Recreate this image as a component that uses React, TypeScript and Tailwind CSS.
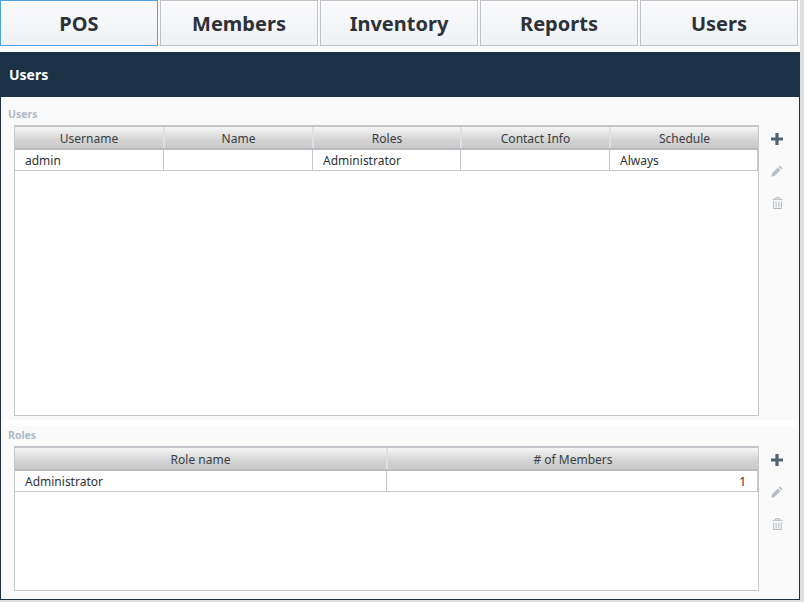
import React from 'react';

const tabs = ['POS', 'Members', 'Inventory', 'Reports', 'Users'];

const headCell = 'flex items-center justify-center pt-[2px] border-l-2 first:border-l-0 border-[#e0e0e0] text-[12px] text-[#3a3f45] bg-gradient-to-b from-[#f6f6f6] via-[#d4d4d4] via-60% to-[#c9c9c9]';
const bodyCell = 'flex items-center pt-[1px] border-r border-[#c4c8cc] px-[10px] text-[12px] text-[#2f3338]';

const ActionRail: React.FC = () => (
    <div className="w-[40px] flex flex-col items-center pt-[8px] pr-[4px] gap-[20px] shrink-0">
        <svg width="12" height="12" viewBox="0 0 12 12" className="text-[#4f6478]">
            <path d="M4.4 0h3.2v4.4H12v3.2H7.6V12H4.4V7.6H0V4.4h4.4z" fill="currentColor" />
        </svg>
        <svg width="12" height="12" viewBox="0 0 13 13" className="text-[#b5bec7]">
            <path d="M9.6 0.6l2.8 2.8-1.4 1.4-2.8-2.8zM7.4 2.8l2.8 2.8-6.4 6.4L0.4 12.6l0.6-3.4z" fill="currentColor" />
        </svg>
        <svg width="11" height="12" viewBox="0 0 12 13" fill="none" className="text-[#a9b4bd]" stroke="currentColor">
            <path d="M0.5 2.5h11M4 2.5V0.7h4v1.8M1.8 4.5v8h8.4v-8M4.5 5v6.5M7.5 5v6.5" />
        </svg>
    </div>
);

const App: React.FC = () => {
    return (
        <div className="w-[804px] h-[602px] bg-[#dedede] overflow-hidden" style={{ fontFamily: '"Noto Sans", sans-serif' }}>
            {/* Top nav */}
            <div className="h-[52px] w-[800px] bg-[#fafafa] flex gap-[2px]">
                {tabs.map((tab, i) => (
                    <div
                        key={tab}
                        className={`w-[158px] h-[46px] flex items-center justify-center pt-[2px] border text-[20px] font-bold text-[#2d3239] bg-gradient-to-b from-[#fbfbfc] to-[#eef1f5] ${i === 0 ? 'border-[#4da3e0]' : 'border-[#c0c3c6]'}`}
                    >
                        {tab}
                    </div>
                ))}
            </div>

            {/* Panel */}
            <div className="w-[800px] h-[548px] border-x border-b border-[#1a3146] bg-[#fafafa] flex flex-col">
                <div className="h-[45px] -mx-px bg-[#1a3146] flex items-center px-[9px] text-[14px] font-bold text-white shrink-0">Users</div>

                <div className="h-[21px] mt-[7px] flex items-center pl-[7px] text-[10.5px] font-bold text-[#aeb9c4]">Users</div>
                <div className="flex pl-[13px] h-[291px] shrink-0">
                    <div className="flex-1 border border-t-2 border-[#c4c8cc] bg-white flex flex-col">
                        <div className="grid grid-cols-[148px_149px_148px_149px_149px] h-[23px] border-b-2 border-[#b8bcc0]">
                            {['Username', 'Name', 'Roles', 'Contact Info', 'Schedule'].map((h) => (
                                <div key={h} className={headCell}>{h}</div>
                            ))}
                        </div>
                        <div className="grid grid-cols-[149px_149px_148px_149px_148px] h-[21px] border-b border-[#c4c8cc]">
                            {['admin', '', 'Administrator', '', 'Always'].map((c, i) => (
                                <div key={i} className={bodyCell}>{c}</div>
                            ))}
                        </div>
                    </div>
                    <ActionRail />
                </div>

                <div className="h-[6px] mt-[4px] mx-[4px] bg-white shrink-0" />
                <div className="h-[20px] flex items-center pl-[7px] text-[10.5px] font-bold text-[#aeb9c4] shrink-0">Roles</div>
                <div className="flex pl-[13px] h-[145px] shrink-0">
                    <div className="flex-1 border border-t-2 border-[#c4c8cc] bg-white flex flex-col">
                        <div className="grid grid-cols-[371px_1fr] h-[23px] border-b-2 border-[#b8bcc0]">
                            {['Role name', '# of Members'].map((h) => (
                                <div key={h} className={headCell}>{h}</div>
                            ))}
                        </div>
                        <div className="grid grid-cols-[372px_1fr] h-[21px] border-b border-[#c4c8cc]">
                            <div className={bodyCell}>Administrator</div>
                            <div className={`${bodyCell} justify-end pr-[11px]`}>1</div>
                        </div>
                    </div>
                    <ActionRail />
                </div>
            </div>
        </div>
    );
};

export default App;
